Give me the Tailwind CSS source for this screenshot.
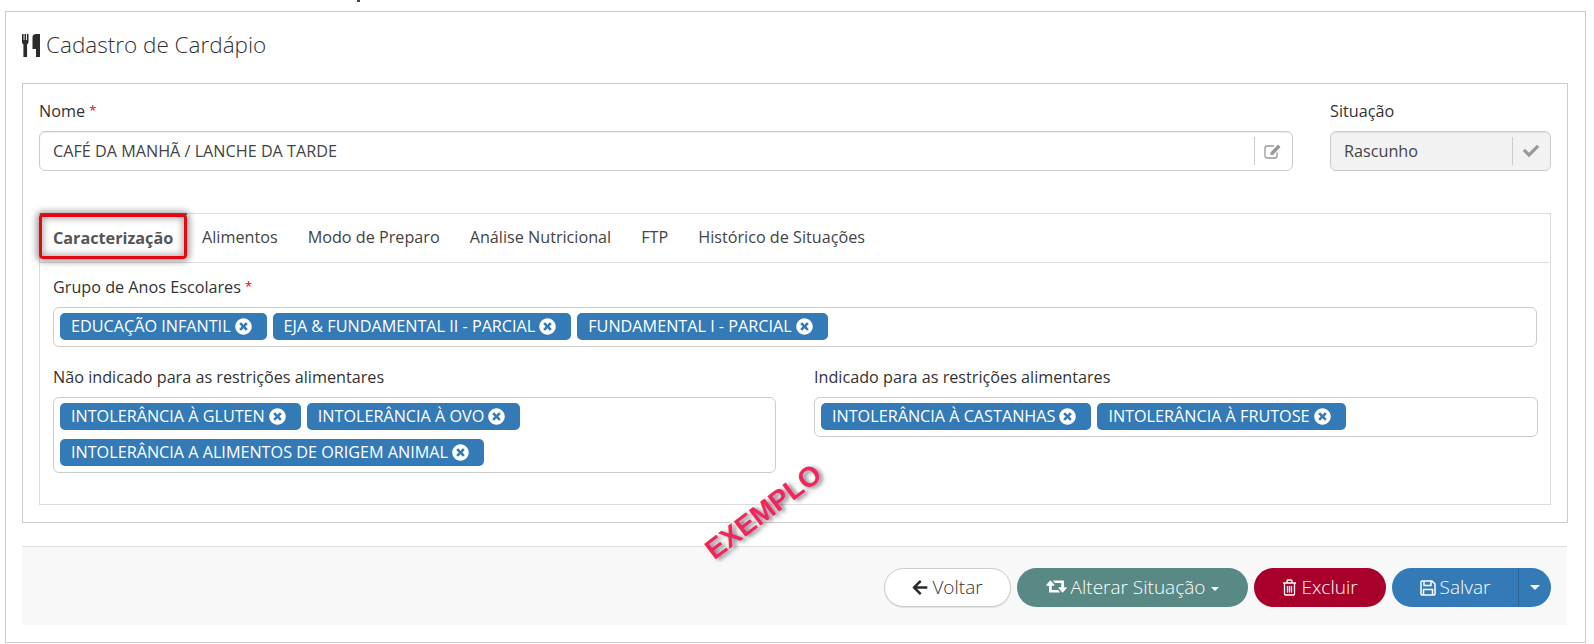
<!DOCTYPE html>
<html lang="pt-BR">
<head>
  <meta charset="UTF-8">
  <title>Cadastro de Cardápio</title>
  <script src="https://cdn.jsdelivr.net/npm/@tailwindcss/browser@4"></script>
</head>
<body class="bg-white font-['Open_Sans',sans-serif] text-[16.2px] text-[#333]">
  <div class="relative w-[1594px] h-[644px] overflow-hidden pt-[11px] pl-[5px]">
    <div class="absolute left-[357px] top-0 w-[3px] h-[2px] bg-[#444]"></div>
    <div class="w-[1581px] h-[632px] border border-[#ccc] px-4 pt-[16px]">
      <!-- titulo -->
      <h1 class="flex items-center h-[34px] text-[22.5px] font-light text-[#333] gap-[6px]">
        <svg class="w-[18px] h-[23px] text-[#2b2b2b]" viewBox="0 0 18 23" fill="currentColor"><path d="M0 0h1.600v6h.9V0H4v6h.9V0h1.600v8c0 1.200-.8 2-1.400 2.300V23H1.400V10.300C.8 10 0 9.200 0 8zM10.500 3c0-1.800 1.700-3 3.500-3H18v23h-4v-8h-3.500z"/></svg>
        Cadastro de Cardápio
      </h1>

      <div class="mt-[21px] w-[1546px] h-[440px] border border-[#ccc] px-4 pt-[17px]">
        <!-- nome e situacao -->
        <div class="flex gap-[37px]">
          <div class="w-[1254px]">
            <label class="block h-[20px] leading-[20px] mb-[10px]">Nome <span class="relative -top-[2px] text-[13px] text-[#e00]">*</span></label>
            <div class="flex items-center h-[40px] border border-[#ccc] rounded-md pl-[13px] pr-[10px] shadow-[inset_0_1px_1px_rgba(0,0,0,0.08)]">
              <span class="flex-1 text-[#444]">CAFÉ DA MANHÃ / LANCHE DA TARDE</span>
              <span class="w-px h-[28px] bg-[#ccc] mr-[9px]"></span>
              <svg class="w-[18px] h-[16px] text-[#999]" viewBox="0 0 18 16" fill="none" stroke="currentColor" stroke-width="1.300"><path d="M13 9.500V13a2 2 0 0 1-2 2H3a2 2 0 0 1-2-2V5a2 2 0 0 1 2-2h7"/><path d="M6.500 9.500 14 1.500l2.500 2.500-7.500 8H6.500z" fill="currentColor" stroke="none"/></svg>
            </div>
          </div>
          <div class="w-[221px]">
            <label class="block h-[20px] leading-[20px] mb-[10px]">Situação</label>
            <div class="flex items-center h-[40px] border border-[#ccc] rounded-md bg-[#f2f2f2] pl-[13px] pr-[11px] shadow-[inset_0_1px_1px_rgba(0,0,0,0.08)]">
              <span class="flex-1 text-[#444]">Rascunho</span>
              <span class="w-px h-[28px] bg-[#ccc] mr-[10px]"></span>
              <svg class="w-[16px] h-[16px] text-[#999]" viewBox="0 0 512 512" fill="currentColor"><path d="M173.898 439.404l-166.4-166.4c-9.997-9.997-9.997-26.206 0-36.204l36.203-36.204c9.997-9.998 26.207-9.998 36.204 0L192 312.69 432.095 72.596c9.997-9.997 26.207-9.997 36.204 0l36.203 36.204c9.997 9.997 9.997 26.206 0 36.204l-294.4 294.401c-9.998 9.997-26.207 9.997-36.204-.001z"/></svg>
            </div>
          </div>
        </div>

        <!-- abas -->
        <div class="mt-[42px] w-[1512px] h-[292px] border border-[#ddd]">
          <div class="flex h-[49px] border-b border-[#ddd] text-[#444]">
            <a class="w-[147px] -mt-px h-[49px] border-t-2 border-[#5b7f8c] pl-[13px] leading-[47px] font-bold text-[#555]">Caracterização</a>
            <a class="ml-[15px] leading-[47px]">Alimentos</a>
            <a class="ml-[30px] leading-[47px]">Modo de Preparo</a>
            <a class="ml-[30px] leading-[47px]">Análise Nutricional</a>
            <a class="ml-[30px] leading-[47px]">FTP</a>
            <a class="ml-[30px] leading-[47px]">Histórico de Situações</a>
          </div>
          <div class="px-[13px] pt-[14px]">
            <label class="block h-[20px] leading-[20px] mb-[10px]">Grupo de Anos Escolares <span class="relative -top-[2px] text-[13px] text-[#e00]">*</span></label>
            <div class="flex gap-[6px] h-[40px] border border-[#ccc] rounded-md pl-[6px] pt-[5px]">
              <span class="flex items-center gap-[4px] h-[27px] pl-[11px] pr-[15px] rounded-[5px] bg-[#337ab7] text-white">EDUCAÇÃO INFANTIL <svg class="w-[17px] h-[17px]" viewBox="0 0 512 512" fill="currentColor"><path d="M256 8C119 8 8 119 8 256s111 248 248 248 248-111 248-248S393 8 256 8zm121.6 313.1c4.7 4.7 4.7 12.3 0 17L338 377.6c-4.7 4.7-12.3 4.7-17 0L256 312l-65.1 65.6c-4.7 4.7-12.3 4.7-17 0L134.4 338c-4.7-4.7-4.7-12.3 0-17l65.6-65-65.6-65.1c-4.7-4.7-4.7-12.3 0-17l39.6-39.6c4.7-4.7 12.3-4.7 17 0l65 65.7 65.1-65.6c4.7-4.7 12.3-4.7 17 0l39.6 39.6c4.7 4.7 4.7 12.3 0 17L312 256l65.6 65.1z"/></svg></span>
              <span class="flex items-center gap-[4px] h-[27px] pl-[11px] pr-[15px] rounded-[5px] bg-[#337ab7] text-white">EJA &amp; FUNDAMENTAL II - PARCIAL <svg class="w-[17px] h-[17px]" viewBox="0 0 512 512" fill="currentColor"><path d="M256 8C119 8 8 119 8 256s111 248 248 248 248-111 248-248S393 8 256 8zm121.6 313.1c4.7 4.7 4.7 12.3 0 17L338 377.6c-4.7 4.7-12.3 4.7-17 0L256 312l-65.1 65.6c-4.7 4.7-12.3 4.7-17 0L134.4 338c-4.7-4.7-4.7-12.3 0-17l65.6-65-65.6-65.1c-4.7-4.7-4.7-12.3 0-17l39.6-39.6c4.7-4.7 12.3-4.7 17 0l65 65.7 65.1-65.6c4.7-4.7 12.3-4.7 17 0l39.6 39.6c4.7 4.7 4.7 12.3 0 17L312 256l65.6 65.1z"/></svg></span>
              <span class="flex items-center gap-[4px] h-[27px] pl-[11px] pr-[15px] rounded-[5px] bg-[#337ab7] text-white">FUNDAMENTAL I - PARCIAL <svg class="w-[17px] h-[17px]" viewBox="0 0 512 512" fill="currentColor"><path d="M256 8C119 8 8 119 8 256s111 248 248 248 248-111 248-248S393 8 256 8zm121.6 313.1c4.7 4.7 4.7 12.3 0 17L338 377.6c-4.7 4.7-12.3 4.7-17 0L256 312l-65.1 65.6c-4.7 4.7-12.3 4.7-17 0L134.4 338c-4.7-4.7-4.7-12.3 0-17l65.6-65-65.6-65.1c-4.7-4.7-4.7-12.3 0-17l39.6-39.6c4.7-4.7 12.3-4.7 17 0l65 65.7 65.1-65.6c4.7-4.7 12.3-4.7 17 0l39.6 39.6c4.7 4.7 4.7 12.3 0 17L312 256l65.6 65.1z"/></svg></span>
            </div>
            <div class="grid grid-cols-[723px_724px] gap-[38px] mt-[20px]">
              <div>
                <label class="block h-[20px] leading-[20px] mb-[10px]">Não indicado para as restrições alimentares</label>
                <div class="flex flex-wrap content-start gap-x-[6px] gap-y-[9px] h-[76px] border border-[#ccc] rounded-md pl-[6px] pt-[5px]">
                  <span class="flex items-center gap-[4px] h-[27px] pl-[11px] pr-[15px] rounded-[5px] bg-[#337ab7] text-white">INTOLERÂNCIA À GLUTEN <svg class="w-[17px] h-[17px]" viewBox="0 0 512 512" fill="currentColor"><path d="M256 8C119 8 8 119 8 256s111 248 248 248 248-111 248-248S393 8 256 8zm121.6 313.1c4.7 4.7 4.7 12.3 0 17L338 377.6c-4.7 4.7-12.3 4.7-17 0L256 312l-65.1 65.6c-4.7 4.7-12.3 4.7-17 0L134.4 338c-4.7-4.7-4.7-12.3 0-17l65.6-65-65.6-65.1c-4.7-4.7-4.7-12.3 0-17l39.6-39.6c4.7-4.7 12.3-4.7 17 0l65 65.7 65.1-65.6c4.7-4.7 12.3-4.7 17 0l39.6 39.6c4.7 4.7 4.7 12.3 0 17L312 256l65.6 65.1z"/></svg></span>
                  <span class="flex items-center gap-[4px] h-[27px] pl-[11px] pr-[15px] rounded-[5px] bg-[#337ab7] text-white">INTOLERÂNCIA À OVO <svg class="w-[17px] h-[17px]" viewBox="0 0 512 512" fill="currentColor"><path d="M256 8C119 8 8 119 8 256s111 248 248 248 248-111 248-248S393 8 256 8zm121.6 313.1c4.7 4.7 4.7 12.3 0 17L338 377.6c-4.7 4.7-12.3 4.7-17 0L256 312l-65.1 65.6c-4.7 4.7-12.3 4.7-17 0L134.4 338c-4.7-4.7-4.7-12.3 0-17l65.6-65-65.6-65.1c-4.7-4.7-4.7-12.3 0-17l39.6-39.6c4.7-4.7 12.3-4.7 17 0l65 65.7 65.1-65.6c4.7-4.7 12.3-4.7 17 0l39.6 39.6c4.7 4.7 4.7 12.3 0 17L312 256l65.6 65.1z"/></svg></span>
                  <span class="flex items-center gap-[4px] h-[27px] pl-[11px] pr-[15px] rounded-[5px] bg-[#337ab7] text-white">INTOLERÂNCIA A ALIMENTOS DE ORIGEM ANIMAL <svg class="w-[17px] h-[17px]" viewBox="0 0 512 512" fill="currentColor"><path d="M256 8C119 8 8 119 8 256s111 248 248 248 248-111 248-248S393 8 256 8zm121.6 313.1c4.7 4.7 4.7 12.3 0 17L338 377.6c-4.7 4.7-12.3 4.7-17 0L256 312l-65.1 65.6c-4.7 4.7-12.3 4.7-17 0L134.4 338c-4.7-4.7-4.7-12.3 0-17l65.6-65-65.6-65.1c-4.7-4.7-4.7-12.3 0-17l39.6-39.6c4.7-4.7 12.3-4.7 17 0l65 65.7 65.1-65.6c4.7-4.7 12.3-4.7 17 0l39.6 39.6c4.7 4.7 4.7 12.3 0 17L312 256l65.6 65.1z"/></svg></span>
                </div>
              </div>
              <div>
                <label class="block h-[20px] leading-[20px] mb-[10px]">Indicado para as restrições alimentares</label>
                <div class="flex gap-[6px] h-[40px] border border-[#ccc] rounded-md pl-[6px] pt-[5px]">
                  <span class="flex items-center gap-[4px] h-[27px] pl-[11px] pr-[15px] rounded-[5px] bg-[#337ab7] text-white">INTOLERÂNCIA À CASTANHAS <svg class="w-[17px] h-[17px]" viewBox="0 0 512 512" fill="currentColor"><path d="M256 8C119 8 8 119 8 256s111 248 248 248 248-111 248-248S393 8 256 8zm121.6 313.1c4.7 4.7 4.7 12.3 0 17L338 377.6c-4.7 4.7-12.3 4.7-17 0L256 312l-65.1 65.6c-4.7 4.7-12.3 4.7-17 0L134.4 338c-4.7-4.7-4.7-12.3 0-17l65.6-65-65.6-65.1c-4.7-4.7-4.7-12.3 0-17l39.6-39.6c4.7-4.7 12.3-4.7 17 0l65 65.7 65.1-65.6c4.7-4.7 12.3-4.7 17 0l39.6 39.6c4.7 4.7 4.7 12.3 0 17L312 256l65.6 65.1z"/></svg></span>
                  <span class="flex items-center gap-[4px] h-[27px] pl-[11px] pr-[15px] rounded-[5px] bg-[#337ab7] text-white">INTOLERÂNCIA À FRUTOSE <svg class="w-[17px] h-[17px]" viewBox="0 0 512 512" fill="currentColor"><path d="M256 8C119 8 8 119 8 256s111 248 248 248 248-111 248-248S393 8 256 8zm121.6 313.1c4.7 4.7 4.7 12.3 0 17L338 377.6c-4.7 4.7-12.3 4.7-17 0L256 312l-65.1 65.6c-4.7 4.7-12.3 4.7-17 0L134.4 338c-4.7-4.7-4.7-12.3 0-17l65.6-65-65.6-65.1c-4.7-4.7-4.7-12.3 0-17l39.6-39.6c4.7-4.7 12.3-4.7 17 0l65 65.7 65.1-65.6c4.7-4.7 12.3-4.7 17 0l39.6 39.6c4.7 4.7 4.7 12.3 0 17L312 256l65.6 65.1z"/></svg></span>
                </div>
              </div>
            </div>
          </div>
        </div>
      </div>

      <!-- rodape -->
      <div class="mt-[23px] w-[1545px] h-[79px] border-t border-[#ddd] bg-[#f8f8f8] flex justify-end items-start pt-[21px] pr-[16px] gap-[6px] text-[19px] font-light">
        <button class="flex items-center justify-center gap-[4px] w-[127px] h-[39px] rounded-full border border-[#ccc] bg-white text-[#333] shadow-[0_1px_1px_rgba(0,0,0,0.1)]">
          <svg class="w-[16px] h-[17px] text-[#2b2b2b]" viewBox="0 0 448 512" fill="currentColor"><path d="M257.5 445.1l-22.2 22.2c-9.4 9.4-24.6 9.4-33.9 0L7 273c-9.4-9.4-9.4-24.6 0-33.9L201.4 44.700c9.4-9.4 24.6-9.4 33.9 0l22.2 22.2c9.5 9.5 9.3 25-.4 34.3L136.6 216H424c13.300 0 24 10.700 24 24v32c0 13.300-10.700 24-24 24H136.6l120.5 114.8c9.8 9.3 10 24.8.4 34.3z"/></svg>
          Voltar
        </button>
        <button class="flex items-center justify-center gap-[4px] w-[231px] h-[39px] rounded-full bg-[#588985] text-white">
          <svg class="w-[21px] h-[19px]" viewBox="0 0 1920 1792" fill="currentColor"><path d="M1280 1344q0 13-9.500 22.500t-22.500 9.500h-960q-8 0-13.500-2t-9-7-5.500-6.500-3.500-11-.5-11.500v-600h-192q-26 0-45-19t-19-45q0-24 15-41l320-384q19-22 49-22t49 22l320 384q15 17 15 41 0 26-19 45t-45 19h-192v384h576q16 0 25 11l160 192q7 11 7 21zm640-416q0 24-15 41l-320 384q-20 23-49 23t-49-23l-320-384q-15-17-15-41 0-26 19-45t45-19h192v-384h-576q-16 0-25-12l-160-192q-7-9-7-20 0-13 9.500-22.500t22.500-9.500h960q8 0 13.500 2t9 7 5.500 6.500 3.500 11 .5 11.500v600h192q26 0 45 19t19 45z"/></svg>
          Alterar Situação
          <span class="ml-[2px] w-0 h-0 border-x-[4px] border-x-transparent border-t-[4px] border-t-white mt-[2px]"></span>
        </button>
        <button class="flex items-center justify-center gap-[4px] w-[132px] h-[39px] rounded-full bg-[#a8002b] text-white">
          <svg class="w-[15px] h-[17px]" viewBox="0 0 15 17" fill="none" stroke="currentColor" stroke-width="1.300"><path d="M1 4h13M5 4V2a1 1 0 0 1 1-1h3a1 1 0 0 1 1 1v2M2.500 4v11a1 1 0 0 0 1 1h8a1 1 0 0 0 1-1V4M5.500 7v6.500M7.500 7v6.500M9.500 7v6.500"/></svg>
          Excluir
        </button>
        <div class="flex h-[39px] w-[159px] rounded-full bg-[#337ab7] text-white overflow-hidden">
          <button class="flex flex-1 items-center justify-center gap-[4px] border-r border-[#2a6496]">
            <svg class="w-[16px] h-[16px]" viewBox="0 0 16 16" fill="none" stroke="currentColor" stroke-width="1.500"><path d="M1 2a1 1 0 0 1 1-1h10l3 3v10a1 1 0 0 1-1 1H2a1 1 0 0 1-1-1zM4 1v4.500h7V1M3.500 15V9.500h9V15"/></svg>
            Salvar
          </button>
          <button class="flex w-[32px] items-center justify-center">
            <span class="w-0 h-0 border-x-[5px] border-x-transparent border-t-[5px] border-t-white"></span>
          </button>
        </div>
      </div>
    </div>

    <!-- anotacoes sobre o print -->
    <div class="absolute left-[39px] top-[214px] w-[148px] h-[45px] rounded-[4px] border-[3px] border-[#e30613] shadow-[0_0_6px_3px_rgba(0,0,0,0.35),inset_0_0_6px_2px_rgba(0,0,0,0.3)]"></div>
    <div class="absolute left-[695px] top-[497px] -rotate-[37deg] font-['Liberation_Sans',sans-serif] font-bold text-[28px] leading-[30px] text-[#f0245f] [-webkit-text-stroke:2px_white] [paint-order:stroke_fill] [text-shadow:2px_3px_4px_rgba(0,0,0,0.5)]">EXEMPLO</div>
  </div>
</body>
</html>
